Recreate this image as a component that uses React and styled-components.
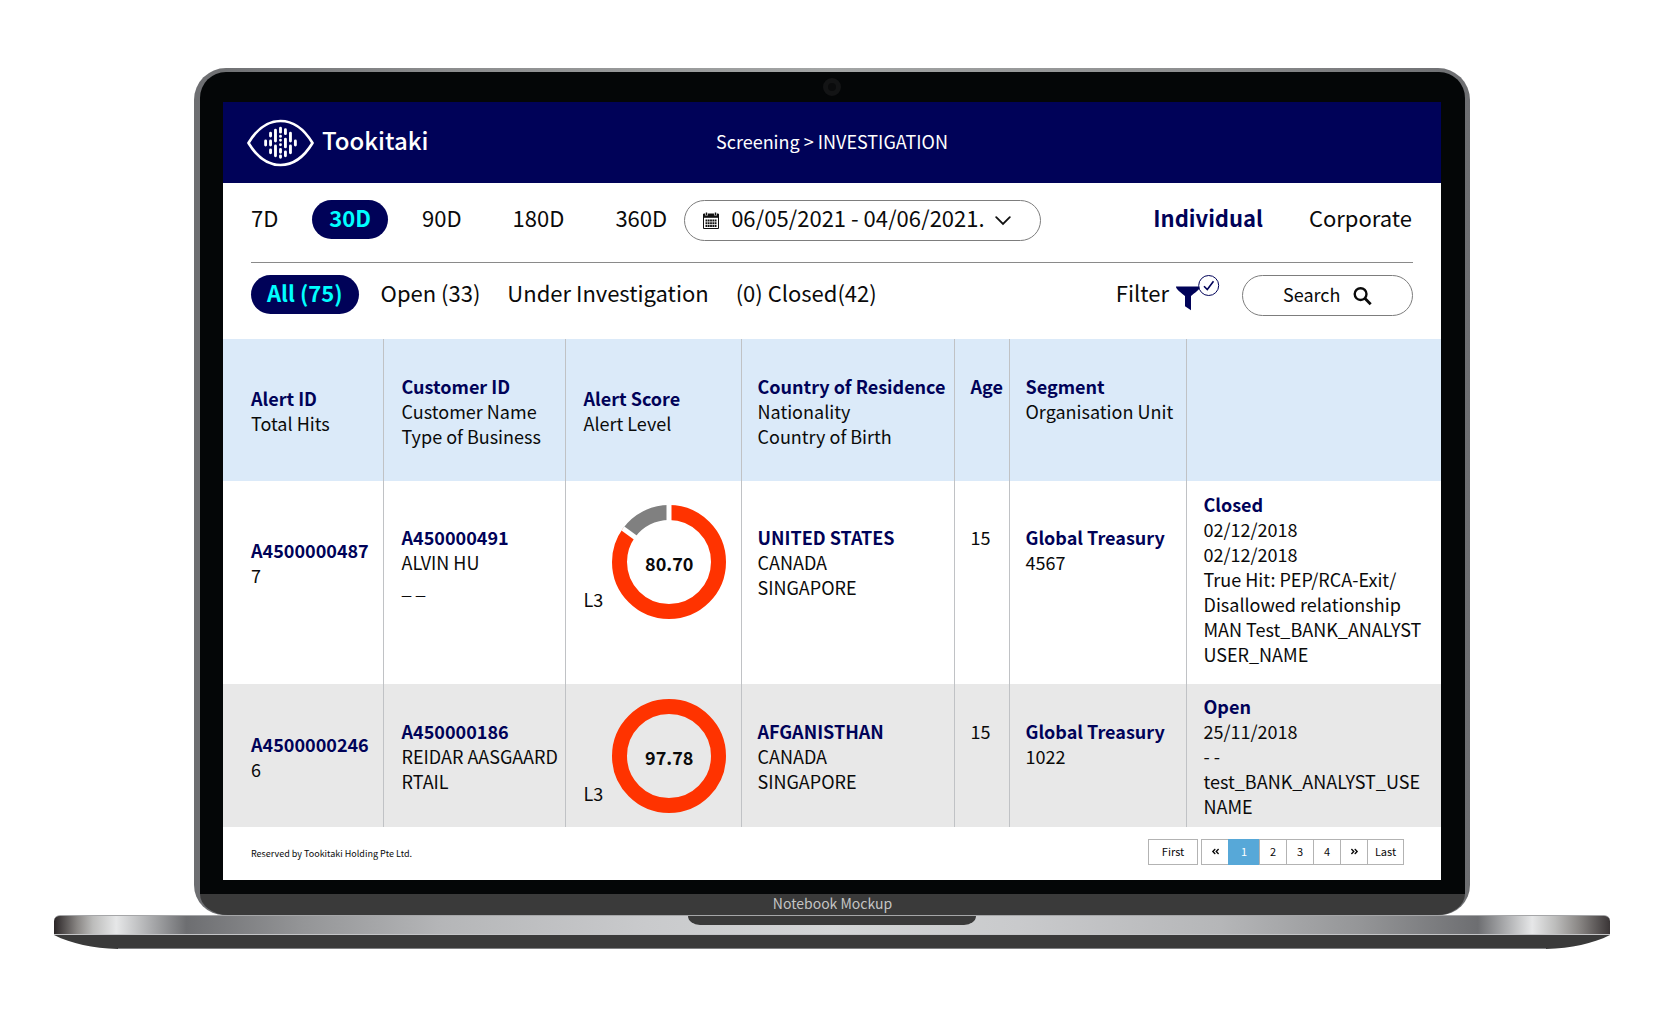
import React, { useState } from 'react'
import styled, { createGlobalStyle } from 'styled-components'
import { FaAngleDoubleLeft, FaAngleDoubleRight } from 'react-icons/fa'

const NAVY = '#000258'
const CYAN = '#00ffff'
const ORANGE = '#ff3300'
const GREY = '#808080'
const FONT = "'Noto Sans CJK SC', 'Noto Sans', sans-serif"

const GlobalStyle = createGlobalStyle`
  * {
    box-sizing: border-box;
  }

  body {
    margin: 0;
    background: #fff;
    color: #0a0a0a;
    font-family: ${FONT};
    font-size: 18px;
    line-height: 25px;
  }

  button,
  input,
  select {
    margin: 0;
    padding: 0;
    border: 0;
    background: none;
    color: inherit;
    font: inherit;
  }

  button {
    cursor: pointer;
  }
`

/* laptop */

const Page = styled.div`
  padding: 68px 68px 68px 54px;
`

const Lid = styled.div`
  margin: 0 140px;
  padding: 4px 5px 0 6px;
  border-radius: 32px 32px 30px 30px;
  background: linear-gradient(to right, #6d6e71, #8c8d8e 20%, #a3a5a5 50%, #8c8d8e 80%, #6d6e71);
`

const Bezel = styled.div`
  padding: 0 24px 14px 23px;
  border-radius: 26px 26px 0 0;
  background: #040607;
`

const CameraBar = styled.div`
  display: flex;
  align-items: center;
  justify-content: center;
  height: 30px;
`

const Camera = styled.span`
  width: 18px;
  height: 18px;
  border: 5px solid #131415;
  border-radius: 50%;
  background: #0a0b0c;
`

const Chin = styled.div`
  height: 21px;
  border-radius: 0 0 28px 28px / 0 0 21px 21px;
  background: #3a3a3a;
  color: #c4c4c4;
  font-size: 14px;
  line-height: 19px;
  text-align: center;
`

const Deck = styled.div`
  display: flex;
  justify-content: center;
  height: 20px;
  border-top: 1px solid #a5a6a8;
  border-bottom: 1px solid #c4c5c7;
  border-radius: 6px 6px 0 0;
  background: linear-gradient(
    to right,
    #2a2526,
    #8a8785 1.5%,
    #bcbcbb 2.5%,
    #e6e7e8 4%,
    #6d6e71 8.5%,
    #949597 16%,
    #b5b6b8 25%,
    #c9cacc 38%,
    #d3d5d6 50%,
    #c9cacc 62%,
    #b5b6b8 75%,
    #949597 84%,
    #6d6e71 91.5%,
    #e6e7e8 95%,
    #bcbcbb 96.5%,
    #8a8785 98%,
    #3a3536
  );
`

const Notch = styled.div`
  width: 288px;
  height: 9px;
  border-radius: 0 0 12px 12px / 0 0 9px 9px;
  background: #3a3a3a;
`

const Underside = styled.div`
  display: flex;
  height: 14px;
`

const UndersideFill = styled.div`
  flex: 1;
  border-bottom: 1px solid #808183;
  background: #3a3a3a;
`

/* screen */

const Screen = styled.main`
  background: #fff;
`

const Header = styled.header`
  display: grid;
  grid-template-columns: 1fr auto 1fr;
  align-items: center;
  height: 81px;
  padding: 0 24px;
  background: ${NAVY};
  color: #fff;
`

const Brand = styled.div`
  display: flex;
  align-items: center;
  gap: 8px;
  padding-top: 1px;
`

const BrandName = styled.span`
  padding-bottom: 8px;
  font-size: 24px;
  font-weight: 500;
`

const Breadcrumb = styled.nav`
  padding-bottom: 3px;
`

const Toolbar = styled.div`
  display: flex;
  align-items: flex-start;
  justify-content: space-between;
  margin: 0 28px;
  padding: ${props => (props.$divided ? '17px 0 21px' : '12px 0 23px')};
  border-bottom: ${props => (props.$divided ? '1px solid #8a8a8a' : '0')};
  font-size: 22px;
`

const Periods = styled.div`
  display: flex;
  gap: 17px;
  margin-left: -17px;
`

const Statuses = styled.div`
  display: flex;
  gap: 17px;
`

const Tab = styled.button`
  height: 39px;
  padding: 0 17px 4px;
  border-radius: 20px;
  white-space: nowrap;

  &[aria-pressed='true'] {
    background: ${NAVY};
    color: ${CYAN};
    font-weight: 700;
  }
`

const StatusTab = styled(Tab)`
  padding: 0 5px 4px;

  &[aria-pressed='true'] {
    padding: 0 16px 4px;
  }
`

const TypeButton = styled.button`
  height: 39px;
  padding: 0 1px 4px;
  color: ${props => (props.$active ? NAVY : 'inherit')};
  font-weight: ${props => (props.$active ? 700 : 400)};
`

const Group = styled.div`
  display: flex;
  gap: ${props => props.$gap || 0}px;
`

const Field = styled.label`
  display: flex;
  align-items: center;
  height: 41px;
  border: 1px solid #7d7d7d;
  border-radius: 21px;
`

const DateField = styled(Field)`
  width: 357px;
  padding: 0 28px 0 18px;
`

const DateSelect = styled.select`
  width: 264px;
  height: 39px;
  margin-left: 12px;
  padding-bottom: 6px;
  appearance: none;
  outline: 0;
`

const SearchField = styled(Field)`
  width: 171px;
  padding: 0 40px;
  font-size: 18px;
`

const SearchInput = styled.input`
  width: 70px;
  height: 39px;
  padding-bottom: 3px;
  outline: 0;

  &::placeholder {
    color: #0a0a0a;
    opacity: 1;
  }
`

const FilterButton = styled.button`
  display: flex;
  align-items: flex-start;
  gap: 7px;
  height: 39px;
  line-height: 35px;
`

/* table */

const Table = styled.table`
  width: 100%;
  border-collapse: collapse;
  table-layout: fixed;
  text-align: left;
`

const Col = styled.col`
  width: ${props => props.$width}px;
`

const Row = styled.tr`
  height: ${props => props.$height}px;
  background: ${props => props.$tone};
`

const Cell = styled.td`
  padding: 0 0 ${props => (props.$lift ? 42 : 0)}px 16px;
  border-right: 1px solid #c0c2c5;
  font-weight: 400;
  vertical-align: middle;
  white-space: nowrap;

  &:first-child {
    padding-left: 28px;
  }

  &:nth-child(2),
  &:nth-child(3) {
    padding-left: 18px;
  }

  &:last-child {
    padding-bottom: ${props => (props.$lift ? 8 : 0)}px;
    padding-left: 17px;
    border-right: 0;
  }
`

const Stack = styled.div`
  display: flex;
  flex-direction: column;
  min-height: ${props => (props.$tall ? 77 : 52)}px;
  padding-top: 2px;
`

const Strong = styled.strong`
  color: ${NAVY};
  font-weight: 700;
`

const Score = styled.div`
  display: flex;
  align-items: flex-end;
  gap: 9px;
`

const Level = styled.span`
  padding-bottom: 7px;
`

const Dial = styled.div`
  display: grid;
  place-items: center;

  > * {
    grid-area: 1 / 1;
  }
`

const ScoreValue = styled.b`
  padding-top: 3px;
`

const Foot = styled.footer`
  display: flex;
  align-items: center;
  justify-content: space-between;
  height: 53px;
  padding: 0 37px 3px 28px;
`

const Copyright = styled.small`
  padding-top: 3px;
  font-size: 9px;
`

const Pager = styled.nav`
  display: flex;
  gap: 3px;
  font-size: 11px;
`

const PagerGroup = styled.div`
  display: flex;
`

const PageButton = styled.button`
  display: flex;
  align-items: center;
  justify-content: center;
  width: ${props => props.$width || 28}px;
  height: 26px;
  margin-right: ${props => (props.$joined ? -1 : 0)}px;
  padding-bottom: 1px;
  border: 1px solid #b3b3b3;

  &[aria-current='page'] {
    border-color: #57a8d8;
    background: #57a8d8;
    color: #fff;
  }
`

/* icons */

const Logo = () => (
  <svg width="67" height="48" viewBox="0 0 68 48" fill="none" stroke="#fff" strokeLinecap="round" aria-hidden="true">
    <path
      d="M1.5 24C10 10 20 1.7 34 1.7S58 10 66.5 24C58 38 48 46.3 34 46.3S10 38 1.5 24Z"
      strokeWidth="2.7"
      strokeLinejoin="round"
    />
    <g strokeWidth="2.9">
      <path d="M18.9 22v4M23.9 14v3M23.9 22v4M23.9 31v3M28.9 11v11M28.9 27v10" />
      <path d="M34 9v4M34 30.5v3M34 37v1.5M39 10.5v4M39 20v8M39 33v4M44.1 14v8M44.1 27v7M49.1 22v4" />
      <path d="M34 17.2v.1M34 21.2v.1M34 25.8v.1" />
    </g>
  </svg>
)

const CalendarIcon = () => (
  <svg width="16" height="17" viewBox="0 0 16 17" aria-hidden="true">
    <path d="M.5 2h15v14.5H.5z" fill="#fff" stroke="#111" />
    <path d="M.5 2h15v3.8H.5z" fill="#111" />
    <path d="M3.5 0v3.6M12.5 0v3.6" stroke="#fff" strokeWidth="2.6" />
    <path d="M3.5 .5v2.7M12.5 .5v2.7" stroke="#111" strokeWidth="1.4" />
    <path
      d="M2.5 8.5h11M2.5 11.3h11M2.5 14h11"
      stroke="#111"
      strokeWidth="1.9"
      strokeDasharray="1.8 .5"
    />
  </svg>
)

const ChevronIcon = () => (
  <svg width="16" height="10" viewBox="0 0 16 10" fill="none" stroke="#111" strokeWidth="1.8" aria-hidden="true">
    <path d="M1.2 1.2 8 8l6.8-6.8" strokeLinecap="round" />
  </svg>
)

const SearchIcon = () => (
  <svg width="20" height="20" viewBox="0 0 20 20" fill="none" stroke="#0a0a0a" aria-hidden="true">
    <circle cx="8" cy="8" r="6.2" strokeWidth="2.5" />
    <path d="m12.4 12.4 6.2 6.2" strokeWidth="3" />
  </svg>
)

const FilterIcon = () => (
  <svg width="44" height="36" viewBox="0 0 44 36" aria-hidden="true">
    <path d="M0 11.5h24c0 2-1 3.2-9 9.5v14.2l-6-4V21C1.5 15 0 13.5 0 11.5Z" fill={NAVY} />
    <circle cx="32.7" cy="10.5" r="10" fill="#fff" stroke={NAVY} />
    <path d="m28 11.2 3.3 3.3L37.5 6.3" fill="none" stroke={NAVY} strokeWidth="1.6" />
  </svg>
)

// pathLength 100 lets `rest` be given in percent of the circle
const Ring = ({ rest }) => (
  <svg width="114" height="114" viewBox="0 0 114 114" fill="none" aria-hidden="true">
    <circle
      cx="57"
      cy="57"
      r="49.5"
      stroke={ORANGE}
      strokeWidth="15"
      pathLength="100"
      strokeDasharray={`${100 - rest} ${rest}`}
      transform="rotate(-90 57 57)"
    />
    {rest > 0 && (
      <React.Fragment>
        <circle
          cx="57"
          cy="57"
          r="49.5"
          stroke={GREY}
          strokeWidth="15"
          pathLength="100"
          strokeDasharray={`${rest} ${100 - rest}`}
          transform={`rotate(${-90 - rest * 3.6} 57 57)`}
        />
        <path d="M57 0v17" stroke="#fff" strokeWidth="5" />
        <path d="M57 0v17" stroke="#fff" strokeWidth="5" transform={`rotate(${-rest * 3.6} 57 57)`} />
      </React.Fragment>
    )}
  </svg>
)

/* data */

const periods = ['7D', '30D', '90D', '180D', '360D']
const statuses = ['All (75)', 'Open (33)', 'Under Investigation', '(0) Closed(42)']
const columnWidths = [160, 182, 176, 213, 55, 177]

const columns = [
  ['Alert ID', 'Total Hits'],
  ['Customer ID', 'Customer Name', 'Type of Business'],
  ['Alert Score', 'Alert Level'],
  ['Country of Residence', 'Nationality', 'Country of Birth'],
  ['Age'],
  ['Segment', 'Organisation Unit'],
  []
]

const alerts = [
  {
    alert: ['A4500000487', '7'],
    customer: ['A450000491', 'ALVIN HU', '_ _'],
    level: 'L3',
    score: '80.70',
    rest: 15,
    country: ['UNITED STATES', 'CANADA', 'SINGAPORE'],
    age: '15',
    segment: ['Global Treasury', '4567'],
    status: [
      'Closed',
      '02/12/2018',
      '02/12/2018',
      'True Hit: PEP/RCA-Exit/',
      'Disallowed relationship',
      'MAN Test_BANK_ANALYST',
      'USER_NAME'
    ],
    height: 203,
    tone: '#fff',
    lift: true
  },
  {
    alert: ['A4500000246', '6'],
    customer: ['A450000186', 'REIDAR AASGAARD', 'RTAIL'],
    level: 'L3',
    score: '97.78',
    rest: 0,
    country: ['AFGANISTHAN', 'CANADA', 'SINGAPORE'],
    age: '15',
    segment: ['Global Treasury', '1022'],
    status: ['Open', '25/11/2018', '- -', 'test_BANK_ANALYST_USE', 'NAME'],
    height: 143,
    tone: '#e8e8e8'
  }
]

const Lines = ({ lines, tall }) => (
  <Stack $tall={tall}>
    {lines.map((line, i) => (i === 0 ? <Strong key={i}>{line}</Strong> : <span key={i}>{line}</span>))}
  </Stack>
)

const AlertRow = ({ item }) => (
  <Row $height={item.height} $tone={item.tone}>
    <Cell $lift={item.lift}><Lines lines={item.alert} /></Cell>
    <Cell $lift={item.lift}><Lines lines={item.customer} tall /></Cell>
    <Cell $lift={item.lift}>
      <Score>
        <Level>{item.level}</Level>
        <Dial>
          <Ring rest={item.rest} />
          <ScoreValue>{item.score}</ScoreValue>
        </Dial>
      </Score>
    </Cell>
    <Cell $lift={item.lift}><Lines lines={item.country} tall /></Cell>
    <Cell $lift={item.lift}><Stack $tall>{item.age}</Stack></Cell>
    <Cell $lift={item.lift}><Lines lines={item.segment} tall /></Cell>
    <Cell $lift={item.lift}><Lines lines={item.status} /></Cell>
  </Row>
)

const App = () => {
  const [period, setPeriod] = useState('30D')
  const [status, setStatus] = useState('All (75)')
  const [type, setType] = useState('Individual')
  const [page, setPage] = useState(1)

  return (
    <Page>
      <GlobalStyle />
      <Lid>
        <Bezel>
          <CameraBar>
            <Camera />
          </CameraBar>
          <Screen>
            <Header>
              <Brand>
                <Logo />
                <BrandName>Tookitaki</BrandName>
              </Brand>
              <Breadcrumb>Screening &gt; INVESTIGATION</Breadcrumb>
            </Header>

            <Toolbar $divided>
              <Group>
                <Periods>
                  {periods.map(name => (
                    <Tab key={name} aria-pressed={name === period} onClick={() => setPeriod(name)}>
                      {name}
                    </Tab>
                  ))}
                </Periods>
                <DateField>
                  <CalendarIcon />
                  <DateSelect aria-label="Date range">
                    <option>06/05/2021 - 04/06/2021.</option>
                  </DateSelect>
                  <ChevronIcon />
                </DateField>
              </Group>
              <Group $gap={44}>
                {['Individual', 'Corporate'].map(name => (
                  <TypeButton key={name} $active={name === type} onClick={() => setType(name)}>
                    {name}
                  </TypeButton>
                ))}
              </Group>
            </Toolbar>

            <Toolbar>
              <Statuses>
                {statuses.map(name => (
                  <StatusTab key={name} aria-pressed={name === status} onClick={() => setStatus(name)}>
                    {name}
                  </StatusTab>
                ))}
              </Statuses>
              <Group $gap={22}>
                <FilterButton>
                  Filter
                  <FilterIcon />
                </FilterButton>
                <SearchField>
                  <SearchInput type="text" placeholder="Search" aria-label="Search" />
                  <SearchIcon />
                </SearchField>
              </Group>
            </Toolbar>

            <Table>
              <colgroup>
                {columnWidths.map((width, i) => <Col key={i} $width={width} />)}
                <col />
              </colgroup>
              <thead>
                <Row $height={142} $tone="#dbeaf9">
                  {columns.map((lines, i) => (
                    <Cell as="th" key={i}>
                      <Lines lines={lines} tall={i !== 0 && i !== 2} />
                    </Cell>
                  ))}
                </Row>
              </thead>
              <tbody>
                {alerts.map(item => <AlertRow key={item.alert[0]} item={item} />)}
              </tbody>
            </Table>

            <Foot>
              <Copyright>Reserved by Tookitaki Holding Pte Ltd.</Copyright>
              <Pager aria-label="Pages">
                <PageButton $width={50} onClick={() => setPage(1)}>First</PageButton>
                <PagerGroup>
                  <PageButton $joined aria-label="Previous" onClick={() => setPage(Math.max(1, page - 1))}>
                    <FaAngleDoubleLeft size={9} />
                  </PageButton>
                  {[1, 2, 3, 4].map(n => (
                    <PageButton
                      key={n}
                      $joined
                      $width={n === page ? 32 : 28}
                      aria-current={n === page ? 'page' : undefined}
                      onClick={() => setPage(n)}
                    >
                      {n}
                    </PageButton>
                  ))}
                  <PageButton $joined aria-label="Next" onClick={() => setPage(Math.min(4, page + 1))}>
                    <FaAngleDoubleRight size={9} />
                  </PageButton>
                  <PageButton $width={37} onClick={() => setPage(4)}>Last</PageButton>
                </PagerGroup>
              </Pager>
            </Foot>
          </Screen>
        </Bezel>
        <Chin>Notebook Mockup</Chin>
      </Lid>
      <Deck>
        <Notch />
      </Deck>
      <Underside>
        <svg width="64" height="14" viewBox="0 0 64 14" aria-hidden="true">
          <path d="M0 0h64v14C38 13 18 9 0 0Z" fill="#3a3a3a" />
        </svg>
        <UndersideFill />
        <svg width="64" height="14" viewBox="0 0 64 14" aria-hidden="true">
          <path d="M64 0H0v14C26 13 46 9 64 0Z" fill="#3a3a3a" />
        </svg>
      </Underside>
    </Page>
  )
}

export default App
